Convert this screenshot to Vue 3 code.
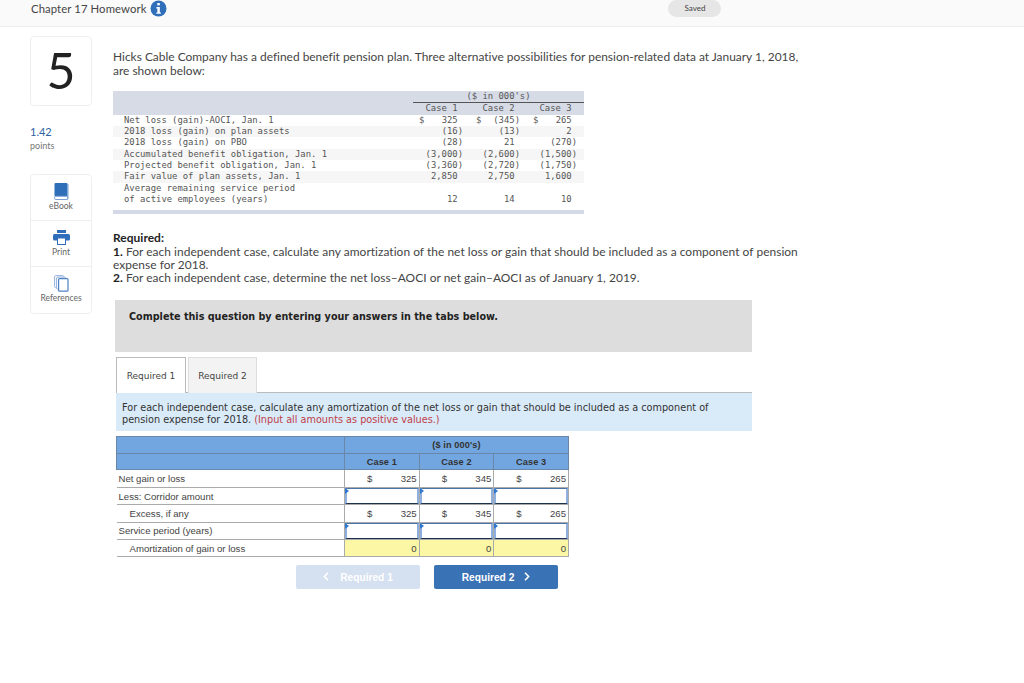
<template>
  <div class="page">
    <header class="topbar">
      <span class="chapter">Chapter 17 Homework</span>
      <svg class="info" width="17" height="17" viewBox="0 0 17 17">
        <circle cx="8.5" cy="8.5" r="8" fill="#2f6fba" />
        <rect x="7.3" y="3" width="2.5" height="2.4" fill="#fff" />
        <path d="M6.4 7h3.4v5.4h1.1v1.4H6.3v-1.4h1.1V8.4h-1z" fill="#fff" />
      </svg>
      <span class="saved">Saved</span>
    </header>

    <div class="body">
      <aside class="side">
        <div class="qnum">5</div>
        <div class="score">1.42</div>
        <div class="points">points</div>
        <div class="tools">
          <div class="tool">
            <svg width="15" height="17" viewBox="0 0 15 17">
              <rect x="0.5" y="0" width="13" height="13.5" rx="1" fill="#2f6fba" />
              <path d="M0.5 14.5q0-1.2 1.5-1.2h11.5v3.2H2q-1.5 0-1.5-1.2z" fill="#fff" stroke="#7ba3d6" />
              <rect x="13.3" y="1" width="1.2" height="15" fill="#7ba3d6" />
            </svg>
            <span>eBook</span>
          </div>
          <div class="tool">
            <svg class="printer" width="17" height="15" viewBox="0 0 17 15">
              <rect x="4" y="0" width="9" height="3" fill="#2f6fba" />
              <rect x="0" y="4" width="17" height="6.5" rx="1.5" fill="#2f6fba" />
              <rect x="4.5" y="8" width="8" height="6.5" fill="#fff" stroke="#2f6fba" />
            </svg>
            <span>Print</span>
          </div>
          <div class="tool">
            <svg width="15" height="17" viewBox="0 0 15 17">
              <rect x="0.6" y="0.6" width="9" height="12" rx="1" fill="#fff" stroke="#8fb0de" />
              <rect x="2.6" y="2.1" width="9" height="12" rx="1" fill="#fff" stroke="#8fb0de" />
              <rect x="4.6" y="3.6" width="9.4" height="12.6" rx="1" fill="#fff" stroke="#4f82c4" stroke-width="1.2" />
            </svg>
            <span>References</span>
          </div>
        </div>
      </aside>

      <main class="main">
        <p class="intro">
          Hicks Cable Company has a defined benefit pension plan. Three alternative possibilities for pension-related data at January 1, 2018, are shown below:
        </p>

        <table class="data">
          <colgroup>
            <col class="col-label" />
            <col v-for="c in cases" :key="c" class="col-case" />
          </colgroup>
          <thead>
            <tr>
              <th></th>
              <th colspan="3" class="span">($ in 000's)</th>
            </tr>
            <tr>
              <th></th>
              <th v-for="c in cases" :key="c">{{ c }}</th>
            </tr>
          </thead>
          <tbody>
            <tr v-for="(row, i) in dataRows" :key="i" :class="{ alt: i % 2 === 1 && i < 6 }">
              <td class="lbl">{{ row.label }}</td>
              <td v-for="(v, j) in row.vals" :key="j" class="val">
                <span v-if="i === 0" class="dollar">$</span>{{ v }}
              </td>
            </tr>
            <tr class="spacer"><td colspan="4"></td></tr>
          </tbody>
        </table>

        <div class="required">
          <strong>Required:</strong><br />
          <strong>1.</strong> For each independent case, calculate any amortization of the net loss or gain that should be included as a component of pension expense for 2018.<br />
          <strong>2.</strong> For each independent case, determine the net loss–AOCI or net gain–AOCI as of January 1, 2019.
        </div>

        <div class="complete">Complete this question by entering your answers in the tabs below.</div>

        <div class="tabs">
          <div class="tab active">Required 1</div>
          <div class="tab">Required 2</div>
        </div>

        <div class="instr">
          For each independent case, calculate any amortization of the net loss or gain that should be included as a component of pension expense for 2018. <span class="red">(Input all amounts as positive values.)</span>
        </div>

        <table class="answer">
          <colgroup>
            <col class="col-first" />
            <col v-for="c in cases" :key="c" />
          </colgroup>
          <thead>
            <tr>
              <th></th>
              <th colspan="3">($ in 000's)</th>
            </tr>
            <tr>
              <th></th>
              <th v-for="c in cases" :key="c">{{ c }}</th>
            </tr>
          </thead>
          <tbody>
            <tr v-for="(row, i) in answerRows" :key="i">
              <td class="first" :class="{ indent: row.indent }">{{ row.label }}</td>
              <td v-for="(v, j) in row.vals || [0, 1, 2]" :key="j" :class="['cell', row.type]">
                <template v-if="row.type === 'money'">
                  <span class="cur">$</span><span>{{ v }}</span>
                </template>
                <template v-else-if="row.type === 'total'">0</template>
                <div v-else class="input"></div>
              </td>
            </tr>
          </tbody>
        </table>

        <div class="nav">
          <button class="btn off">
            <svg class="chev prev" width="6" height="9" viewBox="0 0 6 9"><path d="M5 .8 1.4 4.5 5 8.2" /></svg>Required 1
          </button>
          <button class="btn on">
            Required 2<svg class="chev next" width="6" height="9" viewBox="0 0 6 9"><path d="M1 .8l3.6 3.7L1 8.2" /></svg>
          </button>
        </div>
      </main>
    </div>
  </div>
</template>

<script setup>
const cases = ['Case 1', 'Case 2', 'Case 3']

const dataRows = [
  { label: 'Net loss (gain)-AOCI, Jan. 1', vals: ['325 ', '(345)', '265 '] },
  { label: '2018 loss (gain) on plan assets', vals: ['(16)', '(13)', '2 '] },
  { label: '2018 loss (gain) on PBO', vals: ['(28)', '21 ', '(270)'] },
  { label: 'Accumulated benefit obligation, Jan. 1', vals: ['(3,000)', '(2,600)', '(1,500)'] },
  { label: 'Projected benefit obligation, Jan. 1', vals: ['(3,360)', '(2,720)', '(1,750)'] },
  { label: 'Fair value of plan assets, Jan. 1', vals: ['2,850 ', '2,750 ', '1,600 '] },
  { label: 'Average remaining service period', vals: ['', '', ''] },
  { label: 'of active employees (years)', vals: ['12 ', '14 ', '10 '] }
]

const answerRows = [
  { label: 'Net gain or loss', type: 'money', vals: [325, 345, 265] },
  { label: 'Less: Corridor amount', type: 'entry' },
  { label: 'Excess, if any', type: 'money', vals: [325, 345, 265], indent: true },
  { label: 'Service period (years)', type: 'entry' },
  { label: 'Amortization of gain or loss', type: 'total', indent: true }
]
</script>

<style scoped>
.page {
  width: 1024px;
  height: 683px;
  overflow: hidden;
  background: #fff;
  font-family: Lato, "Open Sans", sans-serif;
  font-variant-ligatures: none;
  color: #333;
}

.topbar {
  height: 27px;
  box-sizing: border-box;
  display: flex;
  align-items: flex-start;
  padding-left: 31px;
  background: #fafafa;
  border-bottom: 1px solid #eee;
}

.chapter {
  font-size: 11.3px;
  line-height: 17px;
  color: #444;
  letter-spacing: 0.1px;
}

.info {
  margin-left: 4px;
}

.saved {
  margin-left: 501px;
  width: 53px;
  height: 17px;
  line-height: 16px;
  text-align: center;
  font-size: 8px;
  color: #444;
  background: #e6e6e6;
  border-radius: 9px;
}

.body {
  display: flex;
}

.side {
  width: 113px;
  box-sizing: border-box;
  padding: 9px 0 0 30px;
  flex-shrink: 0;
}

.qnum {
  width: 62px;
  height: 70px;
  box-sizing: border-box;
  border: 1px solid #eee;
  border-radius: 4px;
  text-align: center;
  font-size: 50px;
  line-height: 66px;
  color: #222;
}

.score {
  margin-top: 18px;
  font-size: 11px;
  line-height: 16px;
  color: #2f5f9e;
}

.points {
  font-size: 9px;
  line-height: 11px;
  color: #777;
}

.tools {
  margin-top: 23px;
  width: 62px;
  box-sizing: border-box;
  border: 1px solid #eee;
  border-radius: 4px;
}

.tool {
  height: 46px;
  box-sizing: border-box;
  display: flex;
  flex-direction: column;
  align-items: center;
  padding-top: 8px;
  font-size: 8.5px;
  line-height: 13px;
  color: #666;
  border-bottom: 1px solid #eee;
}

.tool:last-child {
  border-bottom: none;
}

.printer {
  margin: 1px 0;
}

.main {
  flex: 1;
  padding-top: 23px;
}

.intro {
  margin: 0;
  width: 690px;
  font-size: 11.95px;
  line-height: 14px;
  color: #444;
}

.data {
  margin-top: 13px;
  border-collapse: collapse;
  table-layout: fixed;
  width: 471px;
  font-family: "DejaVu Sans Mono", monospace;
  font-size: 8.9px;
  line-height: 11.33px;
  color: #555;
  border-bottom: 4px solid #d3d9e6;
}

.col-label {
  width: 300px;
}

.col-case {
  width: 57px;
}

.data th {
  background: #d6dbe6;
  padding: 0;
  font-weight: normal;
  text-align: center;
  height: 11px;
}

.data th.span {
  border-bottom: 1px solid #555;
}

.data td {
  padding: 0;
  height: 11.33px;
}

.data tr.alt td {
  background: #f6f6f6;
}

.data tr.spacer td {
  height: 5px;
  line-height: 5px;
}

.data .lbl {
  padding-left: 11px;
}

.data .val {
  position: relative;
  text-align: right;
  padding-right: 7px;
  white-space: pre;
}

.dollar {
  position: absolute;
  left: 6px;
}

.required {
  margin-top: 17px;
  width: 690px;
  font-size: 11.95px;
  line-height: 13.3px;
  letter-spacing: 0.04px;
  color: #444;
}

.required strong {
  font-weight: 700;
  color: #222;
}

.complete {
  margin: 16px 0 0 2px;
  width: 637px;
  height: 52px;
  box-sizing: border-box;
  padding: 9px 14px;
  background: #ddd;
  font-family: "DejaVu Sans", Verdana, sans-serif;
  font-weight: 700;
  font-size: 9.63px;
  line-height: 15px;
  color: #222;
}

.tabs {
  display: flex;
  gap: 2px;
  margin: 5px 0 0 3px;
  width: 636px;
  height: 36px;
  box-sizing: border-box;
  border-bottom: 1px solid #bbb;
}

.tab {
  width: 69px;
  height: 36px;
  box-sizing: border-box;
  border: 1px solid #ddd;
  border-bottom: none;
  background: #f3f3f3;
  text-align: center;
  font-family: "DejaVu Sans", Verdana, sans-serif;
  font-size: 9px;
  line-height: 37px;
  color: #444;
}

.tab.active {
  width: 70px;
  background: #fff;
  border-color: #bbb;
}

.instr {
  margin-left: 3px;
  width: 636px;
  height: 38px;
  box-sizing: border-box;
  padding: 9px 6px 0;
  background: #d9eaf8;
  font-family: "DejaVu Sans", Verdana, sans-serif;
  font-size: 9.7px;
  line-height: 12px;
  color: #333;
}

.red {
  color: #c0404a;
}

.answer {
  margin: 5px 0 0 3px;
  width: 453px;
  table-layout: fixed;
  border-collapse: collapse;
  font-family: "Liberation Sans", Arial, sans-serif;
  font-size: 9.6px;
  color: #444;
}

.col-first {
  width: 228px;
}

.answer th {
  height: 16.5px;
  box-sizing: border-box;
  padding: 0;
  background: #72a6e0;
  border: 1px solid #6b87a8;
  text-align: center;
  font-weight: 700;
  font-size: 9.2px;
  color: #333;
  letter-spacing: 0.1px;
}

.answer td {
  height: 17.4px;
  padding: 0;
  border: 1px solid #aaa;
  box-sizing: border-box;
}

.answer td.first {
  padding-left: 2px;
  border-left: none;
}

.answer td.indent {
  padding-left: 13px;
}

.cell.money {
  padding: 0 2px 0 22px;
}

.cell.money span {
  float: right;
}

.cell.money .cur {
  float: left;
}

.cell.total {
  background: #fbf7a5;
  text-align: right;
  padding-right: 2px;
}

.cell.entry {
  position: relative;
  padding: 0;
}

.input {
  position: relative;
  height: 16px;
  box-sizing: border-box;
  border: 1px solid #4a74a8;
  border-bottom-color: #1d2f4a;
  border-left: 2px solid #8fb0de;
  border-right: 2px solid #8fb0de;
  background: #fff;
}

.input::before {
  content: '';
  position: absolute;
  left: -2px;
  top: -1px;
  border-top: 3px solid transparent;
  border-bottom: 3px solid transparent;
  border-left: 4px solid #2f78d0;
}

.nav {
  display: flex;
  gap: 14px;
  margin: 8px 0 0 183px;
}

.btn {
  width: 124px;
  height: 24px;
  padding: 0;
  border: none;
  border-radius: 2px;
  font-family: "Liberation Sans", Arial, sans-serif;
  font-size: 10.2px;
  font-weight: 700;
  color: #fff;
}

.btn.on {
  background: #3a72b6;
}

.btn.off {
  background: #d5e0f0;
}

.chev {
  fill: none;
  stroke: #fff;
  stroke-width: 1.6;
}

.chev.prev {
  margin-right: 11px;
}

.chev.next {
  margin-left: 10px;
}
</style>
